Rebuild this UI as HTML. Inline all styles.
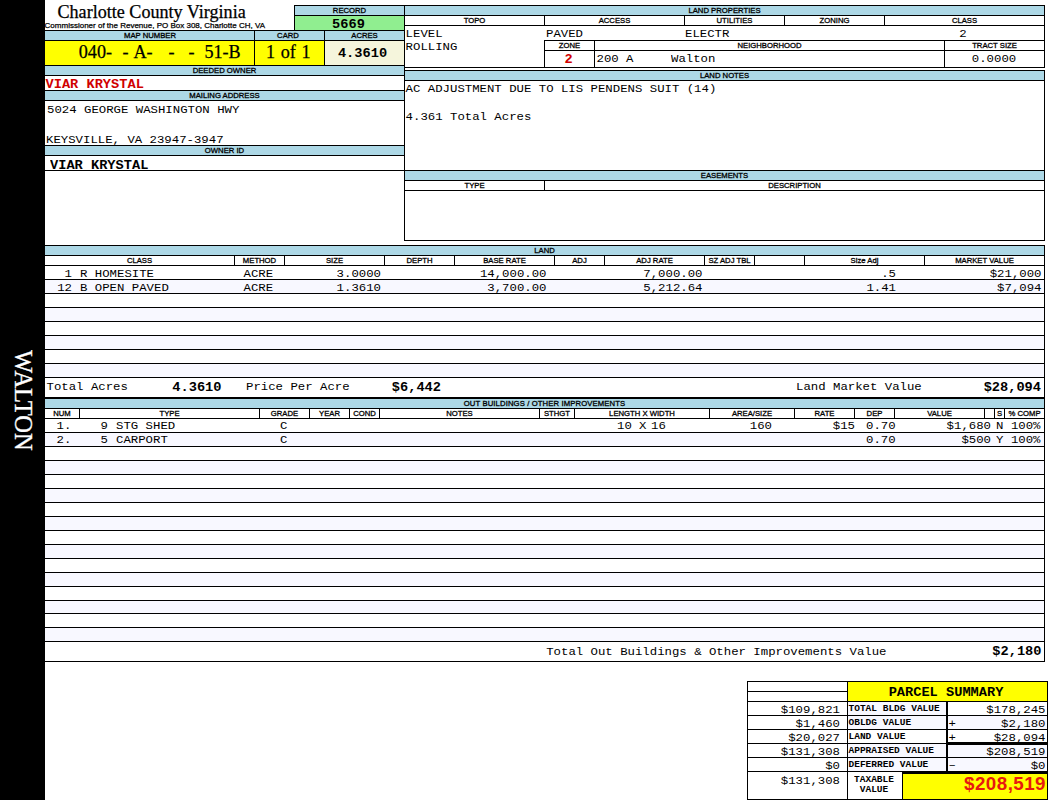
<!DOCTYPE html>
<html lang="en"><head><meta charset="utf-8"><title>Charlotte County Virginia - Parcel Card</title>
<style>
html,body{margin:0;padding:0;background:#fff}
#pg{position:relative;width:1050px;height:800px;overflow:hidden;background:#fff}
.r,.k,.t{position:absolute}
.k{background:#000}
.t{white-space:pre;overflow:visible;color:#000;box-sizing:border-box}
.h{font:7.7px "Liberation Sans",Arial,sans-serif;-webkit-text-stroke:0.3px #000;margin-top:0.3px}
.sub{font:8px "Liberation Sans",Arial,sans-serif;-webkit-text-stroke:0.25px #000}
.title{font:18.1px "Liberation Serif","Times New Roman",serif;-webkit-text-stroke:0.25px #000}
.big{font:18.1px "Liberation Serif","Times New Roman",serif;-webkit-text-stroke:0.25px #000}
.m{font:12.33px "Liberation Mono","Courier New",monospace}
.mb{font:bold 13.67px "Liberation Mono","Courier New",monospace}
.sl{font:bold 9.5px "Liberation Mono","Courier New",monospace}
.m,.mb,.sl{transform:scaleY(.9);transform-origin:50% 50%}
.m{margin-top:-0.8px}
.red{color:#d00000}
.tv{font:bold 18.8px "Liberation Sans",Arial,sans-serif;color:#e8190f;letter-spacing:0.45px}
  .walton{left:10.6px;top:349.5px;-webkit-text-stroke:0.3px #fff;font:24.5px "Liberation Serif","Times New Roman",serif;color:#fff;writing-mode:vertical-rl;line-height:25px;width:25px;height:110px}
</style></head>
<body><div id="pg">
<div class="r" style="left:0px;top:0px;width:45px;height:800px;background:#000"></div>
<div class="t walton">WALTON</div>
<div class="t title" style="left:45px;top:2px;width:250px;height:20px;line-height:20px;text-align:left;padding-left:12.5px">Charlotte County Virginia</div>
<div class="t sub" style="left:44.6px;top:20.5px;width:250px;height:10px;line-height:10px;text-align:left;">Commissioner of the Revenue, PO Box 308, Charlotte CH, VA</div>
<div class="r" style="left:295px;top:6px;width:109px;height:9px;background:#add8e6"></div>
<div class="r" style="left:295px;top:16px;width:109px;height:14px;background:#90ee90"></div>
<div class="k" style="left:294px;top:5px;width:751px;height:1px"></div>
<div class="k" style="left:294px;top:15px;width:751px;height:1px"></div>
<div class="k" style="left:294px;top:5px;width:1px;height:26px"></div>
<div class="t h" style="left:295px;top:6px;width:109px;height:9px;line-height:9px;text-align:center;">RECORD</div>
<div class="t mb" style="left:294px;top:18.3px;width:109px;height:13px;line-height:13px;text-align:center;">5669</div>
<div class="r" style="left:45px;top:31px;width:359px;height:9px;background:#add8e6"></div>
<div class="r" style="left:45px;top:41px;width:279px;height:24px;background:#ffff00"></div>
<div class="r" style="left:325px;top:41px;width:79px;height:24px;background:#f5f5dc"></div>
<div class="k" style="left:44px;top:30px;width:360px;height:1px"></div>
<div class="k" style="left:44px;top:40px;width:360px;height:1px"></div>
<div class="k" style="left:44px;top:65px;width:360px;height:1px"></div>
<div class="k" style="left:254px;top:30px;width:1px;height:35px"></div>
<div class="k" style="left:324px;top:30px;width:1px;height:35px"></div>
<div class="t h" style="left:45px;top:31px;width:210px;height:9px;line-height:9px;text-align:center;">MAP NUMBER</div>
<div class="t h" style="left:254px;top:31px;width:68px;height:9px;line-height:9px;text-align:center;">CARD</div>
<div class="t h" style="left:325px;top:31px;width:79px;height:9px;line-height:9px;text-align:center;">ACRES</div>
<div class="t big" style="left:78.8px;top:40.1px;width:40px;height:24px;line-height:24px;text-align:left;">040-</div>
<div class="t big" style="left:122.5px;top:40.1px;width:40px;height:24px;line-height:24px;text-align:left;">-</div>
<div class="t big" style="left:133.5px;top:40.1px;width:40px;height:24px;line-height:24px;text-align:left;">A-</div>
<div class="t big" style="left:168.5px;top:40.1px;width:40px;height:24px;line-height:24px;text-align:left;">-</div>
<div class="t big" style="left:188.5px;top:40.1px;width:40px;height:24px;line-height:24px;text-align:left;">-</div>
<div class="t big" style="left:204.5px;top:40.1px;width:40px;height:24px;line-height:24px;text-align:left;">51-B</div>
<div class="t big" style="left:266px;top:40.1px;width:60px;height:24px;line-height:24px;text-align:left;word-spacing:1.2px">1 of 1</div>
<div class="t mb" style="left:323px;top:41.5px;width:79px;height:24px;line-height:24px;text-align:center;">4.3610</div>
<div class="r" style="left:45px;top:66px;width:359px;height:9px;background:#add8e6"></div>
<div class="k" style="left:44px;top:75px;width:360px;height:1px"></div>
<div class="t h" style="left:45px;top:66px;width:359px;height:9px;line-height:9px;text-align:center;">DEEDED OWNER</div>
<div class="t mb red" style="left:45.5px;top:78.1px;width:300px;height:14px;line-height:14px;text-align:left;">VIAR KRYSTAL</div>
<div class="k" style="left:44px;top:90px;width:360px;height:1px"></div>
<div class="r" style="left:45px;top:91px;width:359px;height:9px;background:#add8e6"></div>
<div class="k" style="left:44px;top:100px;width:360px;height:1px"></div>
<div class="t h" style="left:45px;top:91px;width:359px;height:9px;line-height:9px;text-align:center;">MAILING ADDRESS</div>
<div class="t m" style="left:47px;top:103.6px;width:350px;height:14px;line-height:14px;text-align:left;">5024 GEORGE WASHINGTON HWY</div>
<div class="t m" style="left:46px;top:133.6px;width:350px;height:14px;line-height:14px;text-align:left;">KEYSVILLE, VA 23947-3947</div>
<div class="k" style="left:44px;top:145px;width:360px;height:1px"></div>
<div class="r" style="left:45px;top:146px;width:359px;height:9px;background:#add8e6"></div>
<div class="k" style="left:44px;top:155px;width:360px;height:1px"></div>
<div class="t h" style="left:45px;top:146px;width:359px;height:9px;line-height:9px;text-align:center;">OWNER ID</div>
<div class="t mb" style="left:50px;top:158.5px;width:300px;height:14px;line-height:14px;text-align:left;">VIAR KRYSTAL</div>
<div class="k" style="left:44px;top:170px;width:360px;height:1px"></div>
<div class="k" style="left:404px;top:5px;width:1px;height:236px"></div>
<div class="r" style="left:405px;top:6px;width:639px;height:9px;background:#add8e6"></div>
<div class="k" style="left:1044px;top:5px;width:1px;height:63px"></div>
<div class="t h" style="left:405px;top:6px;width:639px;height:9px;line-height:9px;text-align:center;">LAND PROPERTIES</div>
<div class="k" style="left:404px;top:25px;width:641px;height:1px"></div>
<div class="k" style="left:544px;top:15px;width:1px;height:10px"></div>
<div class="k" style="left:684px;top:15px;width:1px;height:10px"></div>
<div class="k" style="left:784px;top:15px;width:1px;height:10px"></div>
<div class="k" style="left:884px;top:15px;width:1px;height:10px"></div>
<div class="t h" style="left:405px;top:16.5px;width:139px;height:8px;line-height:8px;text-align:center;">TOPO</div>
<div class="t h" style="left:545px;top:16.5px;width:139px;height:8px;line-height:8px;text-align:center;">ACCESS</div>
<div class="t h" style="left:685px;top:16.5px;width:99px;height:8px;line-height:8px;text-align:center;">UTILITIES</div>
<div class="t h" style="left:785px;top:16.5px;width:99px;height:8px;line-height:8px;text-align:center;">ZONING</div>
<div class="t h" style="left:885px;top:16.5px;width:159px;height:8px;line-height:8px;text-align:center;">CLASS</div>
<div class="t m" style="left:405.6px;top:28.3px;width:130px;height:13px;line-height:13px;text-align:left;">LEVEL</div>
<div class="t m" style="left:405.6px;top:42.1px;width:130px;height:13px;line-height:13px;text-align:left;">ROLLING</div>
<div class="t m" style="left:546px;top:28.3px;width:130px;height:13px;line-height:13px;text-align:left;">PAVED</div>
<div class="t m" style="left:685px;top:28.3px;width:130px;height:13px;line-height:13px;text-align:left;">ELECTR</div>
<div class="t m" style="left:883.5px;top:28.3px;width:159px;height:13px;line-height:13px;text-align:center;">2</div>
<div class="k" style="left:544px;top:40px;width:501px;height:1px"></div>
<div class="k" style="left:544px;top:50px;width:501px;height:1px"></div>
<div class="k" style="left:404px;top:67px;width:641px;height:1px"></div>
<div class="k" style="left:544px;top:40px;width:1px;height:28px"></div>
<div class="k" style="left:594px;top:40px;width:1px;height:28px"></div>
<div class="k" style="left:944px;top:40px;width:1px;height:28px"></div>
<div class="t h" style="left:545px;top:41px;width:49px;height:9px;line-height:9px;text-align:center;">ZONE</div>
<div class="t h" style="left:595px;top:41px;width:349px;height:9px;line-height:9px;text-align:center;">NEIGHBORHOOD</div>
<div class="t h" style="left:945px;top:41px;width:99px;height:9px;line-height:9px;text-align:center;">TRACT SIZE</div>
<div class="t mb red" style="left:544px;top:52px;width:49px;height:16px;line-height:16px;text-align:center;">2</div>
<div class="t m" style="left:596.5px;top:52px;width:100px;height:16px;line-height:16px;text-align:left;">200 A</div>
<div class="t m" style="left:671px;top:52px;width:100px;height:16px;line-height:16px;text-align:left;">Walton</div>
<div class="t m" style="left:944.5px;top:51.7px;width:99px;height:16px;line-height:16px;text-align:center;">0.0000</div>
<div class="k" style="left:404px;top:70px;width:641px;height:1px"></div>
<div class="r" style="left:405px;top:71px;width:639px;height:9px;background:#add8e6"></div>
<div class="k" style="left:404px;top:80px;width:641px;height:1px"></div>
<div class="k" style="left:1044px;top:70px;width:1px;height:171px"></div>
<div class="t h" style="left:405px;top:71px;width:639px;height:9px;line-height:9px;text-align:center;">LAND NOTES</div>
<div class="t m" style="left:405.6px;top:83.2px;width:600px;height:14px;line-height:14px;text-align:left;">AC ADJUSTMENT DUE TO LIS PENDENS SUIT (14)</div>
<div class="t m" style="left:405.6px;top:111.2px;width:600px;height:14px;line-height:14px;text-align:left;">4.361 Total Acres</div>
<div class="k" style="left:404px;top:170px;width:641px;height:1px"></div>
<div class="r" style="left:405px;top:171px;width:639px;height:9px;background:#add8e6"></div>
<div class="k" style="left:404px;top:180px;width:641px;height:1px"></div>
<div class="t h" style="left:405px;top:171px;width:639px;height:9px;line-height:9px;text-align:center;">EASEMENTS</div>
<div class="k" style="left:404px;top:190px;width:641px;height:1px"></div>
<div class="k" style="left:544px;top:180px;width:1px;height:10px"></div>
<div class="t h" style="left:405px;top:181px;width:139px;height:9px;line-height:9px;text-align:center;">TYPE</div>
<div class="t h" style="left:545px;top:181px;width:499px;height:9px;line-height:9px;text-align:center;">DESCRIPTION</div>
<div class="k" style="left:404px;top:240px;width:641px;height:1px"></div>
<div class="k" style="left:44px;top:245px;width:1001px;height:1px"></div>
<div class="r" style="left:45px;top:246px;width:999px;height:9px;background:#add8e6"></div>
<div class="k" style="left:44px;top:255px;width:1001px;height:1px"></div>
<div class="k" style="left:1044px;top:245px;width:1px;height:154px"></div>
<div class="t h" style="left:45px;top:246px;width:999px;height:9px;line-height:9px;text-align:center;">LAND</div>
<div class="k" style="left:44px;top:265px;width:1001px;height:1px"></div>
<div class="k" style="left:44px;top:279px;width:1001px;height:1px"></div>
<div class="r" style="left:45px;top:280px;width:999px;height:13px;background:#f8f8ff"></div>
<div class="k" style="left:44px;top:293px;width:1001px;height:1px"></div>
<div class="k" style="left:44px;top:307px;width:1001px;height:1px"></div>
<div class="r" style="left:45px;top:308px;width:999px;height:13px;background:#f8f8ff"></div>
<div class="k" style="left:44px;top:321px;width:1001px;height:1px"></div>
<div class="k" style="left:44px;top:335px;width:1001px;height:1px"></div>
<div class="r" style="left:45px;top:336px;width:999px;height:13px;background:#f8f8ff"></div>
<div class="k" style="left:44px;top:349px;width:1001px;height:1px"></div>
<div class="k" style="left:44px;top:363px;width:1001px;height:1px"></div>
<div class="r" style="left:45px;top:364px;width:999px;height:13px;background:#f8f8ff"></div>
<div class="k" style="left:44px;top:377px;width:1001px;height:1px"></div>
<div class="t h" style="left:45px;top:256px;width:189px;height:9px;line-height:9px;text-align:center;">CLASS</div>
<div class="k" style="left:234px;top:255px;width:1px;height:10px"></div>
<div class="t h" style="left:235px;top:256px;width:49px;height:9px;line-height:9px;text-align:center;">METHOD</div>
<div class="k" style="left:284px;top:255px;width:1px;height:10px"></div>
<div class="t h" style="left:285px;top:256px;width:99px;height:9px;line-height:9px;text-align:center;">SIZE</div>
<div class="k" style="left:384px;top:255px;width:1px;height:10px"></div>
<div class="t h" style="left:385px;top:256px;width:69px;height:9px;line-height:9px;text-align:center;">DEPTH</div>
<div class="k" style="left:454px;top:255px;width:1px;height:10px"></div>
<div class="t h" style="left:455px;top:256px;width:99px;height:9px;line-height:9px;text-align:center;">BASE RATE</div>
<div class="k" style="left:554px;top:255px;width:1px;height:10px"></div>
<div class="t h" style="left:555px;top:256px;width:49px;height:9px;line-height:9px;text-align:center;">ADJ</div>
<div class="k" style="left:604px;top:255px;width:1px;height:10px"></div>
<div class="t h" style="left:605px;top:256px;width:99px;height:9px;line-height:9px;text-align:center;">ADJ RATE</div>
<div class="k" style="left:704px;top:255px;width:1px;height:10px"></div>
<div class="t h" style="left:705px;top:256px;width:49px;height:9px;line-height:9px;text-align:center;">SZ ADJ TBL</div>
<div class="k" style="left:754px;top:255px;width:1px;height:10px"></div>
<div class="k" style="left:804px;top:255px;width:1px;height:10px"></div>
<div class="t h" style="left:805px;top:256px;width:119px;height:9px;line-height:9px;text-align:center;">Size Adj</div>
<div class="k" style="left:924px;top:255px;width:1px;height:10px"></div>
<div class="t h" style="left:925px;top:256px;width:119px;height:9px;line-height:9px;text-align:center;">MARKET VALUE</div>
<div class="t m" style="left:44px;top:268.9px;width:28px;height:13px;line-height:13px;text-align:right;">1</div>
<div class="t m" style="left:80px;top:268.9px;width:150px;height:13px;line-height:13px;text-align:left;">R HOMESITE</div>
<div class="t m" style="left:243.5px;top:268.9px;width:40px;height:13px;line-height:13px;text-align:left;">ACRE</div>
<div class="t m" style="left:284px;top:268.9px;width:97px;height:13px;line-height:13px;text-align:right;">3.0000</div>
<div class="t m" style="left:454px;top:268.9px;width:92.5px;height:13px;line-height:13px;text-align:right;">14,000.00</div>
<div class="t m" style="left:604px;top:268.9px;width:98.5px;height:13px;line-height:13px;text-align:right;">7,000.00</div>
<div class="t m" style="left:804px;top:268.9px;width:92px;height:13px;line-height:13px;text-align:right;">.5</div>
<div class="t m" style="left:924px;top:268.9px;width:117.5px;height:13px;line-height:13px;text-align:right;">$21,000</div>
<div class="t m" style="left:44px;top:282.9px;width:28px;height:13px;line-height:13px;text-align:right;">12</div>
<div class="t m" style="left:80px;top:282.9px;width:150px;height:13px;line-height:13px;text-align:left;">B OPEN PAVED</div>
<div class="t m" style="left:243.5px;top:282.9px;width:40px;height:13px;line-height:13px;text-align:left;">ACRE</div>
<div class="t m" style="left:284px;top:282.9px;width:97px;height:13px;line-height:13px;text-align:right;">1.3610</div>
<div class="t m" style="left:454px;top:282.9px;width:92.5px;height:13px;line-height:13px;text-align:right;">3,700.00</div>
<div class="t m" style="left:604px;top:282.9px;width:98.5px;height:13px;line-height:13px;text-align:right;">5,212.64</div>
<div class="t m" style="left:804px;top:282.9px;width:92px;height:13px;line-height:13px;text-align:right;">1.41</div>
<div class="t m" style="left:924px;top:282.9px;width:117.5px;height:13px;line-height:13px;text-align:right;">$7,094</div>
<div class="t m" style="left:46.5px;top:380.7px;width:120px;height:15px;line-height:15px;text-align:left;">Total Acres</div>
<div class="t mb" style="left:150.5px;top:379.7px;width:71px;height:15px;line-height:15px;text-align:right;">4.3610</div>
<div class="t m" style="left:246px;top:380.7px;width:120px;height:15px;line-height:15px;text-align:left;">Price Per Acre</div>
<div class="t mb" style="left:380px;top:379.7px;width:61px;height:15px;line-height:15px;text-align:right;">$6,442</div>
<div class="t m" style="left:796px;top:380.7px;width:140px;height:15px;line-height:15px;text-align:left;">Land Market Value</div>
<div class="t mb" style="left:959px;top:379.7px;width:82px;height:15px;line-height:15px;text-align:right;">$28,094</div>
<div class="k" style="left:44px;top:397px;width:1001px;height:2px"></div>
<div class="r" style="left:45px;top:399px;width:999px;height:9px;background:#add8e6"></div>
<div class="k" style="left:44px;top:408px;width:1001px;height:1px"></div>
<div class="k" style="left:1044px;top:397px;width:1px;height:265px"></div>
<div class="t h" style="left:45px;top:399px;width:999px;height:9px;line-height:9px;text-align:center;letter-spacing:0.12px">OUT BUILDINGS / OTHER IMPROVEMENTS</div>
<div class="k" style="left:44px;top:418px;width:1001px;height:1px"></div>
<div class="k" style="left:44px;top:432px;width:1001px;height:1px"></div>
<div class="r" style="left:45px;top:433px;width:999px;height:13px;background:#f8f8ff"></div>
<div class="k" style="left:44px;top:446px;width:1001px;height:1px"></div>
<div class="k" style="left:44px;top:460px;width:1001px;height:1px"></div>
<div class="r" style="left:45px;top:461px;width:999px;height:13px;background:#f8f8ff"></div>
<div class="k" style="left:44px;top:474px;width:1001px;height:1px"></div>
<div class="k" style="left:44px;top:488px;width:1001px;height:1px"></div>
<div class="r" style="left:45px;top:489px;width:999px;height:13px;background:#f8f8ff"></div>
<div class="k" style="left:44px;top:502px;width:1001px;height:1px"></div>
<div class="k" style="left:44px;top:516px;width:1001px;height:1px"></div>
<div class="r" style="left:45px;top:517px;width:999px;height:13px;background:#f8f8ff"></div>
<div class="k" style="left:44px;top:530px;width:1001px;height:1px"></div>
<div class="k" style="left:44px;top:544px;width:1001px;height:1px"></div>
<div class="r" style="left:45px;top:545px;width:999px;height:13px;background:#f8f8ff"></div>
<div class="k" style="left:44px;top:558px;width:1001px;height:1px"></div>
<div class="k" style="left:44px;top:572px;width:1001px;height:1px"></div>
<div class="r" style="left:45px;top:573px;width:999px;height:13px;background:#f8f8ff"></div>
<div class="k" style="left:44px;top:586px;width:1001px;height:1px"></div>
<div class="k" style="left:44px;top:600px;width:1001px;height:1px"></div>
<div class="r" style="left:45px;top:601px;width:999px;height:12px;background:#f8f8ff"></div>
<div class="k" style="left:44px;top:613px;width:1001px;height:1px"></div>
<div class="k" style="left:44px;top:627px;width:1001px;height:1px"></div>
<div class="r" style="left:45px;top:628px;width:999px;height:13px;background:#f8f8ff"></div>
<div class="k" style="left:44px;top:641px;width:1001px;height:1px"></div>
<div class="t h" style="left:45px;top:409px;width:34px;height:9px;line-height:9px;text-align:center;">NUM</div>
<div class="k" style="left:79px;top:408px;width:1px;height:10px"></div>
<div class="t h" style="left:80px;top:409px;width:179px;height:9px;line-height:9px;text-align:center;">TYPE</div>
<div class="k" style="left:259px;top:408px;width:1px;height:10px"></div>
<div class="t h" style="left:260px;top:409px;width:49px;height:9px;line-height:9px;text-align:center;">GRADE</div>
<div class="k" style="left:309px;top:408px;width:1px;height:10px"></div>
<div class="t h" style="left:310px;top:409px;width:39px;height:9px;line-height:9px;text-align:center;">YEAR</div>
<div class="k" style="left:349px;top:408px;width:1px;height:10px"></div>
<div class="t h" style="left:350px;top:409px;width:29px;height:9px;line-height:9px;text-align:center;">COND</div>
<div class="k" style="left:379px;top:408px;width:1px;height:10px"></div>
<div class="t h" style="left:380px;top:409px;width:159px;height:9px;line-height:9px;text-align:center;">NOTES</div>
<div class="k" style="left:539px;top:408px;width:1px;height:10px"></div>
<div class="t h" style="left:540px;top:409px;width:34px;height:9px;line-height:9px;text-align:center;">STHGT</div>
<div class="k" style="left:574px;top:408px;width:1px;height:10px"></div>
<div class="t h" style="left:575px;top:409px;width:134px;height:9px;line-height:9px;text-align:center;">LENGTH X WIDTH</div>
<div class="k" style="left:709px;top:408px;width:1px;height:10px"></div>
<div class="t h" style="left:710px;top:409px;width:84px;height:9px;line-height:9px;text-align:center;">AREA/SIZE</div>
<div class="k" style="left:794px;top:408px;width:1px;height:10px"></div>
<div class="t h" style="left:795px;top:409px;width:59px;height:9px;line-height:9px;text-align:center;">RATE</div>
<div class="k" style="left:854px;top:408px;width:1px;height:10px"></div>
<div class="t h" style="left:855px;top:409px;width:39px;height:9px;line-height:9px;text-align:center;">DEP</div>
<div class="k" style="left:894px;top:408px;width:1px;height:10px"></div>
<div class="t h" style="left:895px;top:409px;width:89px;height:9px;line-height:9px;text-align:center;">VALUE</div>
<div class="k" style="left:984px;top:408px;width:1px;height:10px"></div>
<div class="k" style="left:994px;top:408px;width:1px;height:10px"></div>
<div class="t h" style="left:995px;top:409px;width:9px;height:9px;line-height:9px;text-align:center;">S</div>
<div class="k" style="left:1004px;top:408px;width:1px;height:10px"></div>
<div class="t h" style="left:1005px;top:409px;width:39px;height:9px;line-height:9px;text-align:center;">% COMP</div>
<div class="t m" style="left:56.5px;top:420.7px;width:30px;height:13px;line-height:13px;text-align:left;">1.</div>
<div class="t m" style="left:88px;top:420.7px;width:20px;height:13px;line-height:13px;text-align:right;">9</div>
<div class="t m" style="left:116px;top:420.7px;width:120px;height:13px;line-height:13px;text-align:left;">STG SHED</div>
<div class="t m" style="left:280px;top:420.7px;width:20px;height:13px;line-height:13px;text-align:left;">C</div>
<div class="t m" style="left:617px;top:420.7px;width:20px;height:13px;line-height:13px;text-align:left;">10</div>
<div class="t m" style="left:639px;top:420.7px;width:10px;height:13px;line-height:13px;text-align:left;">X</div>
<div class="t m" style="left:651px;top:420.7px;width:20px;height:13px;line-height:13px;text-align:left;">16</div>
<div class="t m" style="left:709px;top:420.7px;width:63px;height:13px;line-height:13px;text-align:right;">160</div>
<div class="t m" style="left:795px;top:420.7px;width:60px;height:13px;line-height:13px;text-align:right;">$15</div>
<div class="t m" style="left:866px;top:420.7px;width:40px;height:13px;line-height:13px;text-align:left;">0.70</div>
<div class="t m" style="left:895px;top:420.7px;width:96px;height:13px;line-height:13px;text-align:right;">$1,680</div>
<div class="t m" style="left:996px;top:420.7px;width:12px;height:13px;line-height:13px;text-align:left;">N</div>
<div class="t m" style="left:1003.5px;top:420.7px;width:37px;height:13px;line-height:13px;text-align:right;">100%</div>
<div class="t m" style="left:56.5px;top:434.8px;width:30px;height:13px;line-height:13px;text-align:left;">2.</div>
<div class="t m" style="left:88px;top:434.8px;width:20px;height:13px;line-height:13px;text-align:right;">5</div>
<div class="t m" style="left:116px;top:434.8px;width:120px;height:13px;line-height:13px;text-align:left;">CARPORT</div>
<div class="t m" style="left:280px;top:434.8px;width:20px;height:13px;line-height:13px;text-align:left;">C</div>
<div class="t m" style="left:709px;top:434.8px;width:63px;height:13px;line-height:13px;text-align:right;"></div>
<div class="t m" style="left:795px;top:434.8px;width:60px;height:13px;line-height:13px;text-align:right;"></div>
<div class="t m" style="left:866px;top:434.8px;width:40px;height:13px;line-height:13px;text-align:left;">0.70</div>
<div class="t m" style="left:895px;top:434.8px;width:96px;height:13px;line-height:13px;text-align:right;">$500</div>
<div class="t m" style="left:996px;top:434.8px;width:12px;height:13px;line-height:13px;text-align:left;">Y</div>
<div class="t m" style="left:1003.5px;top:434.8px;width:37px;height:13px;line-height:13px;text-align:right;">100%</div>
<div class="k" style="left:44px;top:661px;width:1001px;height:1px"></div>
<div class="k" style="left:44px;top:0px;width:1px;height:662px"></div>
<div class="t m" style="left:546.2px;top:644.6px;width:400px;height:16px;line-height:16px;text-align:left;">Total Out Buildings &amp; Other Improvements Value</div>
<div class="t mb" style="left:959.5px;top:643.7px;width:82px;height:16px;line-height:16px;text-align:right;">$2,180</div>
<div class="r" style="left:848px;top:682px;width:199px;height:19px;background:#ffff00"></div>
<div class="k" style="left:747px;top:681px;width:301px;height:1px"></div>
<div class="k" style="left:747px;top:691px;width:100px;height:1px"></div>
<div class="k" style="left:747px;top:701px;width:301px;height:1px"></div>
<div class="t mb" style="left:848px;top:682.5px;width:196px;height:19px;line-height:19px;text-align:center;">PARCEL SUMMARY</div>
<div class="r" style="left:848px;top:702px;width:98px;height:13px;background:#f8f8ff"></div>
<div class="k" style="left:747px;top:715px;width:301px;height:1px"></div>
<div class="t m" style="left:747px;top:704.6px;width:93px;height:13px;line-height:13px;text-align:right;">$109,821</div>
<div class="t sl" style="left:848.5px;top:703px;width:100px;height:12px;line-height:12px;text-align:left;">TOTAL BLDG VALUE</div>
<div class="t m" style="left:946px;top:704.6px;width:99.5px;height:13px;line-height:13px;text-align:right;">$178,245</div>
<div class="r" style="left:848px;top:716px;width:199px;height:13px;background:#f8f8ff"></div>
<div class="k" style="left:747px;top:729px;width:301px;height:1px"></div>
<div class="t m" style="left:747px;top:718.6px;width:93px;height:13px;line-height:13px;text-align:right;">$1,460</div>
<div class="t sl" style="left:848.5px;top:717px;width:100px;height:12px;line-height:12px;text-align:left;">OBLDG VALUE</div>
<div class="t m" style="left:948.5px;top:718.4px;width:12px;height:13px;line-height:13px;text-align:left;">+</div>
<div class="t m" style="left:946px;top:718.6px;width:99.5px;height:13px;line-height:13px;text-align:right;">$2,180</div>
<div class="k" style="left:747px;top:743px;width:301px;height:1px"></div>
<div class="t m" style="left:747px;top:732.6px;width:93px;height:13px;line-height:13px;text-align:right;">$20,027</div>
<div class="t sl" style="left:848.5px;top:731px;width:100px;height:12px;line-height:12px;text-align:left;">LAND VALUE</div>
<div class="t m" style="left:948.5px;top:732.4px;width:12px;height:13px;line-height:13px;text-align:left;">+</div>
<div class="t m" style="left:946px;top:732.6px;width:99.5px;height:13px;line-height:13px;text-align:right;">$28,094</div>
<div class="r" style="left:848px;top:744px;width:199px;height:13px;background:#f8f8ff"></div>
<div class="k" style="left:747px;top:757px;width:301px;height:1px"></div>
<div class="t m" style="left:747px;top:746.6px;width:93px;height:13px;line-height:13px;text-align:right;">$131,308</div>
<div class="t sl" style="left:848.5px;top:745px;width:100px;height:12px;line-height:12px;text-align:left;">APPRAISED VALUE</div>
<div class="t m" style="left:946px;top:746.6px;width:99.5px;height:13px;line-height:13px;text-align:right;">$208,519</div>
<div class="r" style="left:848px;top:758px;width:199px;height:13px;background:#f8f8ff"></div>
<div class="k" style="left:747px;top:771px;width:301px;height:1px"></div>
<div class="t m" style="left:747px;top:760.6px;width:93px;height:13px;line-height:13px;text-align:right;">$0</div>
<div class="t sl" style="left:848.5px;top:759px;width:100px;height:12px;line-height:12px;text-align:left;">DEFERRED VALUE</div>
<div class="t m" style="left:948.5px;top:759.4px;width:12px;height:13px;line-height:13px;text-align:left;">–</div>
<div class="t m" style="left:946px;top:760.6px;width:99.5px;height:13px;line-height:13px;text-align:right;">$0</div>
<div class="k" style="left:946px;top:701px;width:2px;height:71px"></div>
<div class="k" style="left:946px;top:742px;width:102px;height:3px"></div>
<div class="r" style="left:903px;top:774px;width:144px;height:25px;background:#ffff00"></div>
<div class="k" style="left:902px;top:771px;width:1px;height:29px"></div>
<div class="k" style="left:902px;top:771px;width:146px;height:3px"></div>
<div class="k" style="left:747px;top:799px;width:301px;height:1px"></div>
<div class="k" style="left:747px;top:681px;width:1px;height:119px"></div>
<div class="k" style="left:847px;top:681px;width:1px;height:119px"></div>
<div class="k" style="left:1047px;top:681px;width:1px;height:119px"></div>
<div class="t m" style="left:747px;top:774.1px;width:93px;height:16px;line-height:16px;text-align:right;">$131,308</div>
<div class="t sl" style="left:848px;top:774px;width:52px;height:11px;line-height:11px;text-align:center;">TAXABLE</div>
<div class="t sl" style="left:848px;top:784.3px;width:52px;height:11px;line-height:11px;text-align:center;">VALUE</div>
<div class="t tv" style="left:904px;top:770.8px;width:142px;height:25px;line-height:25px;text-align:right;">$208,519</div>
</div></body></html>
